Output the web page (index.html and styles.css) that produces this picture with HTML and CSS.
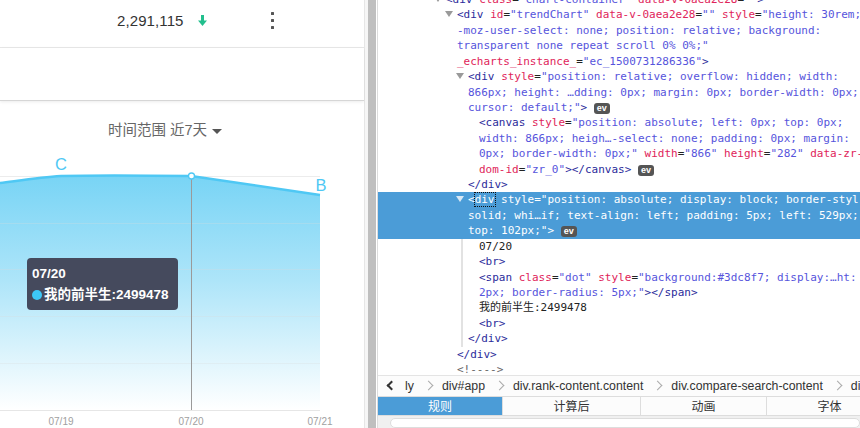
FILE: index.html
```html
<!DOCTYPE html>
<html>
<head>
<meta charset="utf-8">
<link rel="stylesheet" href="styles.css">
</head>
<body>
<div class="screen">
  <div class="app">
    <div class="head-row">
      <span class="num">2,291,115</span>
      <svg class="down" width="9" height="12" viewBox="0 0 9 12"><rect x="3" y="0" width="3" height="6" fill="#22bf8d"/><polygon points="0,5.5 9,5.5 4.5,11" fill="#22bf8d"/></svg>
      <span class="more"><i></i><i></i><i></i></span>
    </div>
    <div class="blank-row"></div>
    <div class="chart-card">
      <div class="range">时间范围 近7天 <span class="caret"></span></div>
      <div class="chart">
        <svg width="364" height="278" viewBox="0 0 364 278">
          <defs>
            <linearGradient id="fill" x1="0" y1="0" x2="0" y2="1">
              <stop offset="0" stop-color="#78d4f5"/>
              <stop offset="0.45" stop-color="#aee5f9"/>
              <stop offset="1" stop-color="#ffffff"/>
            </linearGradient>
          </defs>
          <g stroke="#ececec" stroke-width="1">
            <line x1="0" y1="26.5" x2="320" y2="26.5"/>
          </g>
          <path d="M0 33 C 20 30.5, 40 27.5, 61 26 C 100 25, 150 25.5, 191 26 L 320 45 L 320 260 L 0 260 Z" fill="url(#fill)"/>
          <g stroke="#ffffff" stroke-opacity="0.25" stroke-width="1">
            <line x1="0" y1="73.5" x2="320" y2="73.5"/>
            <line x1="0" y1="119.5" x2="320" y2="119.5"/>
            <line x1="0" y1="166.5" x2="320" y2="166.5"/>
            <line x1="0" y1="213.5" x2="320" y2="213.5"/>
          </g>
          <g stroke="#000" stroke-opacity="0.04" stroke-width="1">
            <line x1="0" y1="73.5" x2="320" y2="73.5"/>
            <line x1="0" y1="119.5" x2="320" y2="119.5"/>
            <line x1="0" y1="166.5" x2="320" y2="166.5"/>
            <line x1="0" y1="213.5" x2="320" y2="213.5"/>
          </g>
          <line x1="0" y1="260.5" x2="320" y2="260.5" stroke="#e6e6e6"/>
          <path d="M0 33 C 20 30.5, 40 27.5, 61 26 C 100 25, 150 25.5, 191 26 L 320 45" fill="none" stroke="#4fc8f4" stroke-width="2.5"/>
          <line x1="191.5" y1="26" x2="191.5" y2="260" stroke="#9a9a9a" stroke-width="1"/>
          <circle cx="191.5" cy="26" r="3" fill="#fff" stroke="#4fc8f4" stroke-width="1.3"/>
          <text x="61" y="19.5" class="lbl" text-anchor="middle">C</text>
          <text x="321" y="40.5" class="lbl" text-anchor="middle">B</text>
          <text x="61" y="274.5" class="ax" text-anchor="middle">07/19</text>
          <text x="191" y="274.5" class="ax" text-anchor="middle">07/20</text>
          <text x="320" y="274.5" class="ax" text-anchor="middle">07/21</text>
        </svg>
        <div class="tip">
          <div>07/20</div>
          <div><span class="dot"></span>我的前半生:2499478</div>
        </div>
      </div>
    </div>
  </div>
  <div class="gap"></div>
  <div class="splitter"></div>
  <div class="inspector">
    <div class="markup">
      <div class="lines">
        <div class="ln" style="padding-left:68px"><span class="tw"></span><span class="t">&lt;div</span> <span class="an">class</span>=<span class="av">"chart-container"</span> <span class="an">data-v-0aea2e28</span>=<span class="av">""</span><span class="t">&gt;</span></div>
        <div class="ln" style="padding-left:79px"><span class="tw"></span><span class="t">&lt;div</span> <span class="an">id</span>=<span class="av">"trendChart"</span> <span class="an">data-v-0aea2e28</span>=<span class="av">""</span> <span class="an">style</span>=<span class="av">"height: 30rem;</span></div>
        <div class="ln" style="padding-left:79px"><span class="av">-moz-user-select: none; position: relative; background:</span></div>
        <div class="ln" style="padding-left:79px"><span class="av">transparent none repeat scroll 0% 0%;"</span></div>
        <div class="ln" style="padding-left:79px"><span class="an">_echarts_instance_</span>=<span class="av">"ec_1500731286336"</span><span class="t">&gt;</span></div>
        <div class="ln" style="padding-left:90px"><span class="tw"></span><span class="t">&lt;div</span> <span class="an">style</span>=<span class="av">"position: relative; overflow: hidden; width:</span></div>
        <div class="ln" style="padding-left:90px"><span class="av">866px; height: …dding: 0px; margin: 0px; border-width: 0px;</span></div>
        <div class="ln" style="padding-left:90px"><span class="av">cursor: default;"</span><span class="t">&gt;</span> <span class="ev">ev</span></div>
        <div class="ln" style="padding-left:101px"><span class="t">&lt;canvas</span> <span class="an">style</span>=<span class="av">"position: absolute; left: 0px; top: 0px;</span></div>
        <div class="ln" style="padding-left:101px"><span class="av">width: 866px; heigh…-select: none; padding: 0px; margin:</span></div>
        <div class="ln" style="padding-left:101px"><span class="av">0px; border-width: 0px;"</span> <span class="an">width</span>=<span class="av">"866"</span> <span class="an">height</span>=<span class="av">"282"</span> <span class="an">data-zr-</span></div>
        <div class="ln" style="padding-left:101px"><span class="an">dom-id</span>=<span class="av">"zr_0"</span><span class="t">&gt;&lt;/canvas&gt;</span> <span class="ev">ev</span></div>
        <div class="ln" style="padding-left:90px"><span class="t">&lt;/div&gt;</span></div>
        <div class="sel">
          <div class="ln" style="padding-left:90px"><span class="tw"></span>&lt;<span class="focus">div</span> style="position: absolute; display: block; border-styl</div>
          <div class="ln" style="padding-left:90px">solid; whi…if; text-align: left; padding: 5px; left: 529px;</div>
          <div class="ln" style="padding-left:90px">top: 102px;"&gt; <span class="ev">ev</span></div>
        </div>
        <div class="kids">
          <div class="ln" style="padding-left:16px"><span class="tx">07/20</span></div>
          <div class="ln" style="padding-left:16px"><span class="t">&lt;br&gt;</span></div>
          <div class="ln" style="padding-left:16px"><span class="t">&lt;span</span> <span class="an">class</span>=<span class="av">"dot"</span> <span class="an">style</span>=<span class="av">"background:#3dc8f7; display:…ht:</span></div>
          <div class="ln" style="padding-left:16px"><span class="av">2px; border-radius: 5px;"</span><span class="t">&gt;&lt;/span&gt;</span></div>
          <div class="ln" style="padding-left:16px"><span class="tx">我的前半生:2499478</span></div>
          <div class="ln" style="padding-left:16px"><span class="t">&lt;br&gt;</span></div>
          <div class="ln" style="padding-left:5px"><span class="t">&lt;/div&gt;</span></div>
        </div>
        <div class="ln" style="padding-left:79px"><span class="t">&lt;/div&gt;</span></div>
        <div class="ln" style="padding-left:79px"><span class="cm">&lt;!----&gt;</span></div>
      </div>
    </div>
    <div class="crumbs">
      <span class="back"></span>
      <span class="crumb">ly</span><span class="sep"></span>
      <span class="crumb">div#app</span><span class="sep"></span>
      <span class="crumb">div.rank-content.content</span><span class="sep"></span>
      <span class="crumb">div.compare-search-content</span><span class="sep"></span>
      <span class="crumb">div</span>
    </div>
    <div class="tabs">
      <div class="tab on w1">规则</div>
      <div class="tab w2">计算后</div>
      <div class="tab w3">动画</div>
      <div class="tab w4">字体</div>
    </div>
    <div class="rules-top"><div class="filter"></div></div>
  </div>
</div>
</body>
</html>
```
FILE: styles.css
```css
* { box-sizing: border-box; }
html, body { margin: 0; padding: 0; }
body { width: 860px; height: 428px; overflow: hidden; background: #fff; font-family: "Liberation Sans", Arial, sans-serif; }
.screen { display: flex; height: 428px; }

.app { width: 365px; flex: none; border-right: 1px solid #e6e6e6; background: #fff; display: flex; flex-direction: column; }
.head-row { height: 48px; border-bottom: 1px solid #e8e8e8; display: flex; align-items: center; padding-bottom: 6px; }
.num { margin-left: 117px; font-size: 15px; color: #333; letter-spacing: 0.1px; }
.down { margin-left: 14px; }
.more { margin-left: 64px; display: flex; flex-direction: column; gap: 3.5px; }
.more i { display: block; width: 3.5px; height: 3.5px; background: #555; border-radius: 0.5px; }
.blank-row { height: 53px; border-bottom: 1px solid #d6d6d6; box-shadow: 0 1px 3px rgba(0,0,0,0.08); }
.chart-card { flex: 1; padding-top: 19px; }
.range { width: 330px; text-align: center; font-family: "Liberation Sans", "Noto Sans CJK SC", sans-serif; font-size: 14.5px; line-height: 20px; color: #666; height: 30px; }
.caret { display: inline-block; width: 0; height: 0; border-left: 5px solid transparent; border-right: 5px solid transparent; border-top: 5px solid #555; vertical-align: middle; margin-left: 1px; }
.chart { position: relative; height: 278px; }
.chart svg { display: block; }
.lbl { font-family: "Liberation Sans", Arial, sans-serif; font-size: 16.5px; fill: #4fc8f4; }
.ax { font-family: "Liberation Sans", Arial, sans-serif; font-size: 10px; fill: #a0a0a0; }
.tip { position: absolute; left: 27px; top: 108px; width: 151px; height: 52px; background: #454a5d; border-radius: 4px; padding: 5px 5px; color: #fff; font-family: "Liberation Sans", "Noto Sans CJK SC", sans-serif; font-weight: bold; font-size: 13.5px; line-height: 21px; white-space: nowrap; }
.tip .dot { display: inline-block; width: 10px; height: 10px; border-radius: 5px; background: #3dc8f7; margin-right: 2px; vertical-align: -1px; }

.gap { width: 3px; flex: none; background: #f6f6f6; }
.splitter { flex: none; background: #bfbfbf; border-right: 1px solid #fff; width: 9px; }
.inspector { flex: 1; border-left: 1px solid #dcdcdc; display: flex; flex-direction: column; min-width: 0; }
.markup { height: 375px; overflow: hidden; flex: none; }
.lines { margin-top: -8px; font-family: "DejaVu Sans Mono", "Noto Sans CJK SC", monospace; font-size: 11px; color: #222; }
.ln { height: 15.43px; line-height: 15.43px; white-space: pre; overflow: hidden; }
.t { color: #2b2b9b; }
.an { color: #e0245a; }
.av { color: #5654dc; }
.tx { color: #222; }
.cm { color: #666; }
.tw { display: inline-block; width: 0; height: 0; border-left: 4px solid transparent; border-right: 4px solid transparent; border-top: 6px solid #9a9a9a; margin-left: -12px; margin-right: 4px; vertical-align: 1px; }
.ev { display: inline-block; background: #555; color: #fff; font-family: "Liberation Sans", Arial, sans-serif; font-weight: bold; font-size: 9px; line-height: 11px; height: 11px; padding: 0 3px; border-radius: 3px; vertical-align: 0px; }
.sel { background: #4b9cd7; color: #fff; }
.sel .tw { border-top-color: #d8e8f5; }
.focus { outline: 1px dotted #111; outline-offset: 0; }
.kids { margin-left: 83px; border-left: 2px solid #e2e2e2; }

.crumbs { height: 25px; border-top: 1px solid #e4e4e4; display: flex; align-items: center; font-size: 12.3px; color: #333; white-space: nowrap; overflow: hidden; padding-left: 10px; background: #fcfcfc; }
.back { width: 7px; height: 7px; border-left: 2px solid #333; border-bottom: 2px solid #333; transform: rotate(45deg); margin-right: 10px; flex: none; }
.crumb:first-of-type { color: #666; }
.sep { width: 7px; height: 7px; border-right: 1px solid #aaa; border-top: 1px solid #aaa; transform: rotate(45deg); margin: 0 10px 0 11px; flex: none; }
.tabs { height: 24px; display: flex; border-top: 1px solid #ddd; border-bottom: 1px solid #ddd; font-family: "Noto Sans CJK SC", sans-serif; font-size: 12px; color: #333; background: #fcfcfc; }
.tab { display: flex; align-items: center; justify-content: center; border-right: 1px solid #ddd; flex: none; }
.tab.on { background: #4b9cd7; color: #fff; }
.w1 { width: 125px; }
.w2 { width: 138px; }
.w3 { width: 126px; }
.w4 { width: 126px; }
.rules-top { flex: 1; background: #f0f0f0; padding: 2px 0 0 12px; }
.filter { height: 10px; background: #fff; border: 1px solid #ddd; border-radius: 6px; }
```
